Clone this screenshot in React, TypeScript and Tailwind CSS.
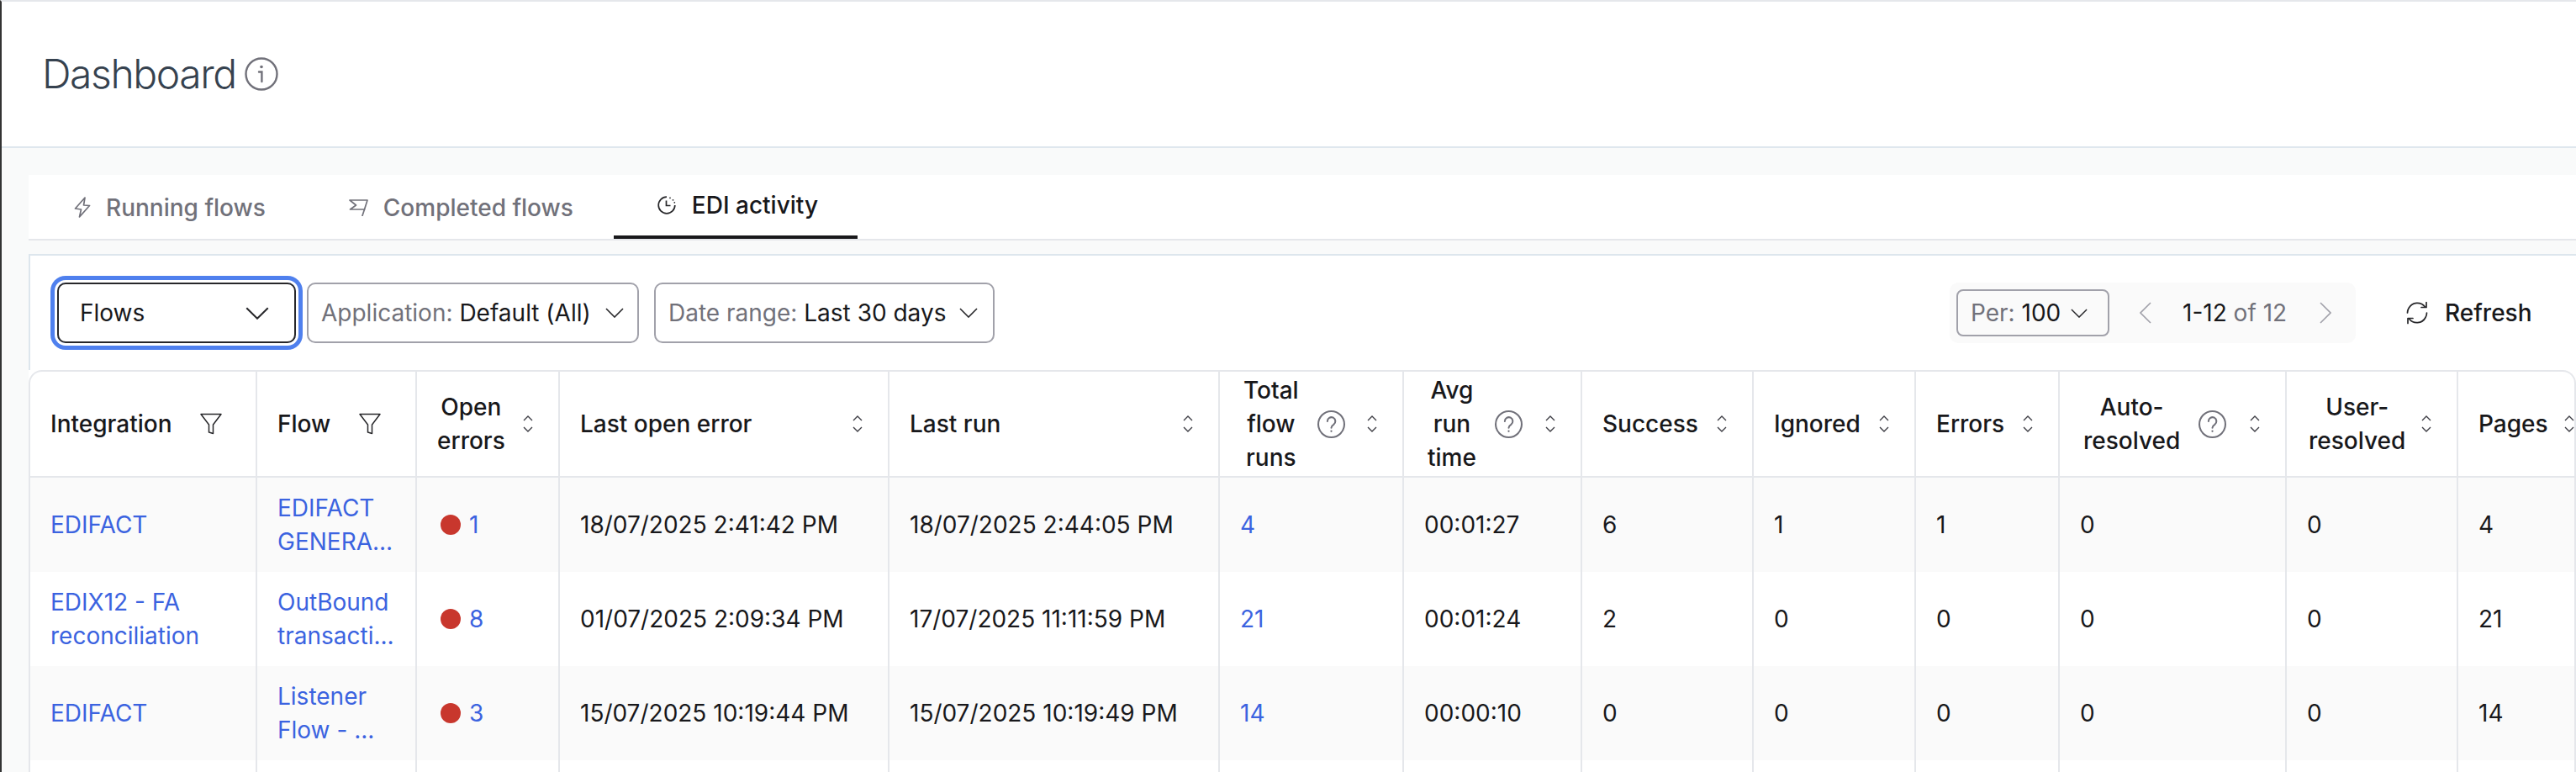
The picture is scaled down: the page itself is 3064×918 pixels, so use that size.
import React from 'react';

const Chevron = ({ className = 'w-[22px] h-[12px]' }: { className?: string }) => (
  <svg viewBox="0 0 22 12" className={`shrink-0 ${className}`} fill="none" stroke="#27272a" strokeWidth="1.6" preserveAspectRatio="none">
    <path d="M1 1l10 10L21 1" />
  </svg>
);

const SortIcon = () => (
  <svg viewBox="0 0 12 20" className="w-[12px] h-[20px] shrink-0" fill="none" stroke="#3f3f46" strokeWidth="1.4">
    <path d="M1 6l5-5 5 5" />
    <path d="M1 14l5 5 5-5" />
  </svg>
);

const FunnelIcon = () => (
  <svg viewBox="0 0 26 26" className="w-[26px] h-[26px] shrink-0" fill="none" stroke="#27272a" strokeWidth="1.5" strokeLinejoin="round">
    <path d="M1 1.500h24L15.500 14v10.500l-5-1.500v-9L1 1.500z" />
  </svg>
);

const HelpIcon = () => (
  <svg viewBox="0 0 32 32" className="w-[33px] h-[33px] shrink-0" fill="none" stroke="#71717a" strokeWidth="2">
    <circle cx="16" cy="16" r="15" />
    <path d="M11.500 12.500a4.600 4.600 0 1 1 7.200 3.800c-1.700 1.100-2.700 2-2.700 3.700" strokeLinecap="round" />
    <circle cx="16" cy="24" r="1.100" fill="#71717a" stroke="none" />
  </svg>
);

const InfoIcon = () => (
  <svg viewBox="0 0 40 40" className="w-[40px] h-[40px] shrink-0" fill="none" stroke="#71717a" strokeWidth="2.400">
    <circle cx="20" cy="20" r="18.500" />
    <path d="M17 17.500h3.400V29" strokeLinecap="round" />
    <circle cx="20" cy="11.500" r="1.800" fill="#71717a" stroke="none" />
  </svg>
);

const BoltIcon = () => (
  <svg viewBox="0 0 20 25" className="w-[20px] h-[25px] shrink-0" fill="none" stroke="#71717a" strokeWidth="1.700" strokeLinejoin="round">
    <path d="M13 1L1.500 14l7 1L6.500 24 18.500 10.500l-7-.5L13 1z" />
  </svg>
);

const FlagIcon = () => (
  <svg viewBox="0 0 23 20" className="w-[23px] h-[20px] shrink-0" fill="none" stroke="#71717a" strokeWidth="1.700" strokeLinejoin="round">
    <path d="M1 1h21l-3.500 11H1.500l7-5L1 1z" />
    <path d="M18.500 12l-2.500 7.500" strokeLinecap="round" />
  </svg>
);

const ClockIcon = () => (
  <svg viewBox="0 0 22 22" className="w-[22px] h-[22px] shrink-0" fill="none" stroke="#27272a" strokeWidth="1.700">
    <path d="M11 1.200A9.800 9.800 0 1 0 20.800 11" />
    <path d="M10.500 5.500v6h5" />
    <circle cx="15" cy="2.300" r="0.900" fill="#27272a" stroke="none" />
    <circle cx="18.500" cy="4.800" r="0.900" fill="#27272a" stroke="none" />
    <circle cx="20.300" cy="7.800" r="0.900" fill="#27272a" stroke="none" />
  </svg>
);

const RefreshIcon = () => (
  <svg viewBox="0 0 26 28" className="w-[26px] h-[28px] shrink-0" fill="none" stroke="#27272a" strokeWidth="1.700" strokeLinecap="round" strokeLinejoin="round">
    <path d="M22.500 7A11.500 11.500 0 0 0 3 8.500 11 11 0 0 0 1.500 14" />
    <path d="M24 1.500V7.500h-6" />
    <path d="M3.500 21A11.500 11.500 0 0 0 23 19.500 11 11 0 0 0 24.500 14" />
    <path d="M2 26.500V20.500h6" />
  </svg>
);

type Col = {
  label: string;
  width: string;
  wrap?: boolean;
  filter?: boolean;
  help?: boolean;
  pad?: string;
};

const columns: Col[] = [
  { label: 'Integration', width: 'w-[270px]', filter: true },
  { label: 'Flow', width: 'w-[190px]', filter: true },
  { label: 'Open errors', width: 'w-[170px]', wrap: true },
  { label: 'Last open error', width: 'w-[392px]' },
  { label: 'Last run', width: 'w-[393px]' },
  { label: 'Total flow runs', width: 'w-[219px]', wrap: true, help: true, pad: 'pl-[28px]' },
  { label: 'Avg run time', width: 'w-[212px]', wrap: true, help: true, pad: 'pl-[28px]' },
  { label: 'Success', width: 'w-[204px]' },
  { label: 'Ignored', width: 'w-[193px]' },
  { label: 'Errors', width: 'w-[171px]' },
  { label: 'Auto-resolved', width: 'w-[270px]', wrap: true, help: true, pad: 'pl-[28px]' },
  { label: 'User-resolved', width: 'w-[204px]', wrap: true, pad: 'pl-[26px]' },
  { label: 'Pages', width: 'w-[170px]' },
];

const rows = [
  {
    integration: ['EDIFACT'],
    flow: ['EDIFACT', 'GENERA...'],
    open: 1,
    lastError: '18/07/2025 2:41:42 PM',
    lastRun: '18/07/2025 2:44:05 PM',
    total: 4,
    avg: '00:01:27',
    rest: [6, 1, 1, 0, 0, 4],
  },
  {
    integration: ['EDIX12 - FA', 'reconciliation'],
    flow: ['OutBound', 'transacti...'],
    open: 8,
    lastError: '01/07/2025 2:09:34 PM',
    lastRun: '17/07/2025 11:11:59 PM',
    total: 21,
    avg: '00:01:24',
    rest: [2, 0, 0, 0, 0, 21],
  },
  {
    integration: ['EDIFACT'],
    flow: ['Listener', 'Flow - ...'],
    open: 3,
    lastError: '15/07/2025 10:19:44 PM',
    lastRun: '15/07/2025 10:19:49 PM',
    total: 14,
    avg: '00:00:10',
    rest: [0, 0, 0, 0, 0, 14],
  },
];

const cell = 'h-[112px] pl-6 pr-2 border-r-2 border-[#e5e7eb] font-normal text-left align-middle';
const link = 'text-[#3b63e0]';

const Lines = ({ lines }: { lines: string[] }) => (
  <div className={link}>
    {lines.map((l) => (
      <div key={l} className="whitespace-nowrap">{l}</div>
    ))}
  </div>
);

export default function App() {
  return (
    <div className="h-[918px] overflow-hidden border-t-2 border-l-2 border-t-[#e5e7eb] border-l-[#333333] bg-[#f9fafa] font-['Inter',sans-serif] text-[28px] leading-[40px] text-[#18181b]">
      <header className="h-[174px] flex items-center gap-[10px] pl-[48px] bg-white border-b-2 border-[#dfe7ee]">
        <h1 className="text-[48px] leading-[56px] font-light tracking-[-1.400px] text-[#36424f]">Dashboard</h1>
        <InfoIcon />
      </header>

      <main className="pt-8 pl-8">
        <nav className="h-[78px] flex bg-white border-b-2 border-[#e5e7eb] text-[#71717a] font-medium">
          <div className="flex items-center gap-[18px] pl-[54px] pt-[1px]">
            <BoltIcon />
            <span>Running flows</span>
          </div>
          <div className="flex items-center gap-[18px] ml-[99px] pt-[1px]">
            <FlagIcon />
            <span>Completed flows</span>
          </div>
          <div className="relative flex items-center gap-[19px] ml-[48px] pl-[52px] pr-[47px] pb-[4px] text-[#18181b]">
            <ClockIcon />
            <span>EDI activity</span>
            <div className="absolute left-0 right-0 bottom-0 h-[4px] bg-[#18181b]" />
          </div>
        </nav>

        <section className="mt-4 bg-white border-t-2 border-[#dde6ed]">
          <div className="h-[136px] flex items-start pt-8 border-l-2 border-[#dde6ed]">
            <div className="ml-8 w-[284px] h-[72px] flex items-center justify-between pl-[25px] pr-[30px] border-2 border-[#27272a] rounded-[10px] shadow-[0_0_0_3px_white,0_0_0_8px_#4f80ee]">
              <span>Flows</span>
              <Chevron className="w-[28px] h-[15px]" />
            </div>
            <div className="ml-[13px] w-[395px] h-[72px] flex items-center gap-[17px] pl-[15px] border-2 border-[#a1a1aa] rounded-[10px]">
              <span className="whitespace-nowrap"><span className="text-[#71717a]">Application: </span>Default (All)</span>
              <Chevron />
            </div>
            <div className="ml-[18px] w-[405px] h-[72px] flex items-center gap-[16px] pl-[15px] border-2 border-[#a1a1aa] rounded-[10px]">
              <span className="whitespace-nowrap"><span className="text-[#71717a]">Date range: </span>Last 30 days</span>
              <Chevron />
            </div>

            <div className="ml-auto flex items-center">
              <div className="w-[483px] h-[72px] flex items-center pl-2 bg-[#fafafa] rounded-[10px]">
                <div className="w-[182px] h-[56px] flex items-center justify-between pl-[15px] pr-[24px] border-2 border-[#a1a1aa] rounded-[8px]">
                  <span className="whitespace-nowrap"><span className="text-[#71717a]">Per: </span>100</span>
                  <Chevron className="w-[20px] h-[11px]" />
                </div>
                <svg viewBox="0 0 14 26" className="w-[14px] h-[26px] ml-[36px]" fill="none" stroke="#a1a1aa" strokeWidth="1.600">
                  <path d="M13 1L1 13l12 12" />
                </svg>
                <span className="ml-[37px] whitespace-nowrap">1-12 <span className="text-[#71717a]">of 12</span></span>
                <svg viewBox="0 0 14 26" className="w-[14px] h-[26px] ml-[39px]" fill="none" stroke="#a1a1aa" strokeWidth="1.600">
                  <path d="M1 1l12 12L1 25" />
                </svg>
              </div>
              <div className="w-[262px] flex items-center gap-[20px] pl-[60px] font-medium">
                <RefreshIcon />
                <span>Refresh</span>
              </div>
            </div>
          </div>

          <div className="overflow-hidden bg-white border-2 border-b-0 border-[#e5e7eb] rounded-t-[16px]">
            <table className="table-fixed w-[3058px] border-separate border-spacing-0">
              <thead>
                <tr>
                  {columns.map((c) => (
                    <th key={c.label} className={`${c.width} h-[126px] ${c.pad ?? 'pl-6'} pr-[30px] border-r-2 border-b-2 border-[#e5e7eb] font-medium`}>
                      <div className={c.filter ? 'flex items-center gap-[34px]' : 'flex items-center justify-between'}>
                        <div className="flex items-center gap-[22px]">
                          <span className={c.wrap ? 'w-min text-center' : 'whitespace-nowrap'}>{c.label}</span>
                          {c.help && <HelpIcon />}
                        </div>
                        {c.filter ? <FunnelIcon /> : <SortIcon />}
                      </div>
                    </th>
                  ))}
                </tr>
              </thead>
              <tbody>
                {rows.map((r, i) => (
                  <tr key={i} className={i % 2 === 0 ? 'bg-[#fafafa]' : 'bg-white'}>
                    <td className={cell}><Lines lines={r.integration} /></td>
                    <td className={cell}><Lines lines={r.flow} /></td>
                    <td className={cell}>
                      <div className="flex items-center gap-[10px] pl-1">
                        <span className="w-[24px] h-[24px] rounded-full bg-[#c8372d]" />
                        <span className={link}>{r.open}</span>
                      </div>
                    </td>
                    <td className={cell}>{r.lastError}</td>
                    <td className={cell}>{r.lastRun}</td>
                    <td className={`${cell} ${link}`}>{r.total}</td>
                    <td className={cell}>{r.avg}</td>
                    {r.rest.map((v, j) => (
                      <td key={j} className={cell}>{v}</td>
                    ))}
                  </tr>
                ))}
                <tr className="bg-white">
                  {columns.map((c) => (
                    <td key={c.label} className={cell} />
                  ))}
                </tr>
              </tbody>
            </table>
          </div>
        </section>
      </main>
    </div>
  );
}
